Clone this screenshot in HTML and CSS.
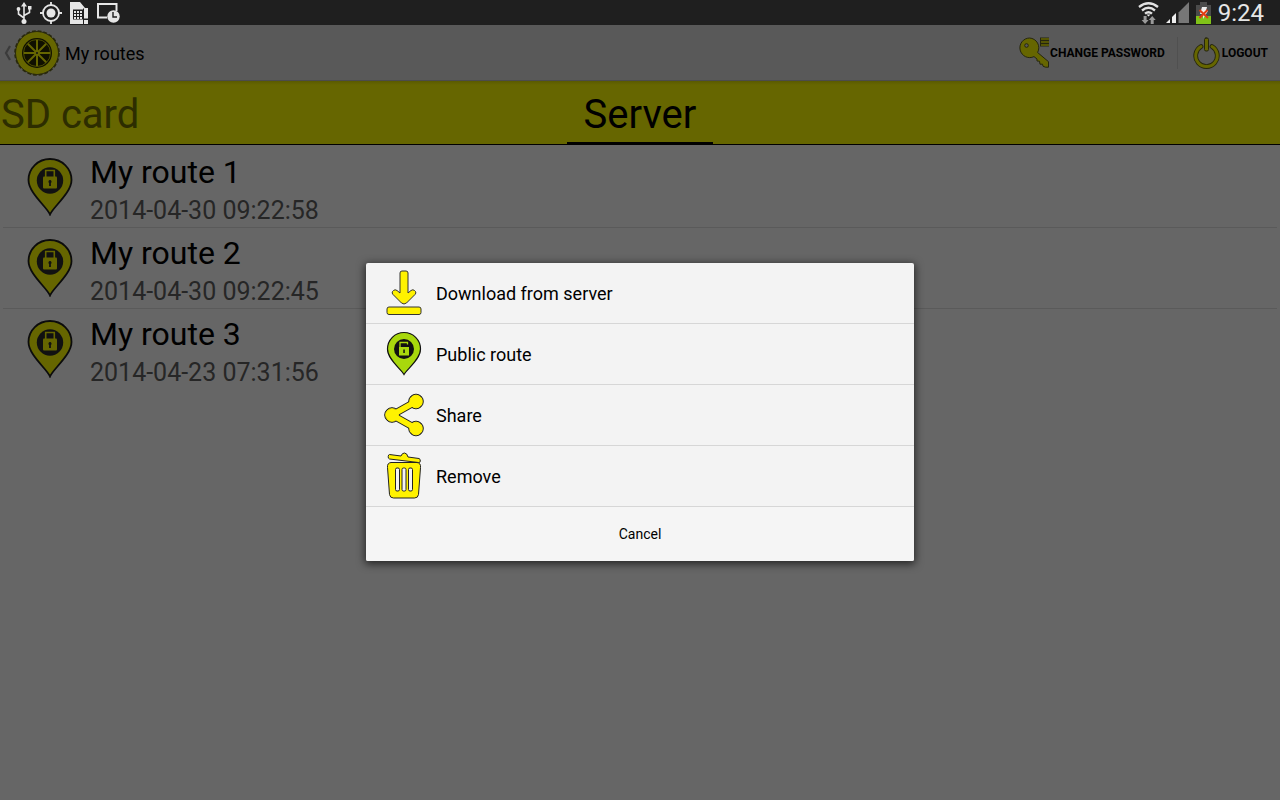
FILE: index.html
```html
<!DOCTYPE html>
<html lang="en">
<head>
<meta charset="utf-8">
<meta name="viewport" content="width=device-width, initial-scale=1">
<title>My routes</title>
<link rel="stylesheet" href="styles.css">
</head>
<body>
<svg class="sprite" aria-hidden="true">
  <symbol id="locked-pin" viewBox="0 0 46 58">
    <path d="M23 56.500C20 49 1.500 35 1.500 22a21.500 21 0 0 1 43 0C44.500 35 26 49 23 56.500z" fill="#666600" stroke="#0c0c0c" stroke-width="1.800"/>
    <circle cx="23" cy="22.500" r="13.200" fill="#111"/>
    <path d="M18.700 19v-6.500h8.600V19" fill="none" stroke="#666600" stroke-width="1.600"/>
    <rect x="16" y="18.500" width="14" height="12" rx="1" fill="#666600"/>
    <path d="M23 22a1.600 1.600 0 0 1 .9 2.900V28h-1.800v-3.100A1.600 1.600 0 0 1 23 22z" fill="#111"/>
  </symbol>
</svg>
<div class="screen">
  <div class="status">
    <div class="status-group notices">
      <svg width="16" height="22" viewBox="0 0 16 22" fill="none" stroke="#e6e6e6" stroke-width="1.600"><path d="M8 19V3M8 16l-5.500-4V7M8 13.500l5.500-3V6"/><path d="M8 0l3 4.500H5z" fill="#e6e6e6" stroke="none"/><circle cx="8" cy="19.500" r="2.500" fill="#e6e6e6" stroke="none"/><circle cx="2.500" cy="7" r="1.900" fill="#e6e6e6" stroke="none"/><path d="M12 4h3.500v3.500H12z" fill="#e6e6e6" stroke="none"/></svg>
      <svg width="22" height="22" viewBox="0 0 22 22" fill="none" stroke="#e6e6e6" stroke-width="1.800"><circle cx="11" cy="11" r="8"/><circle cx="11" cy="11" r="4.500" fill="#e6e6e6" stroke="none"/><path d="M11 0v4M11 18v4M0 11h4M18 11h4"/></svg>
      <svg width="19" height="22" viewBox="0 0 19 22"><path d="M0 0h10l5 6h3v10.500h-4V22H0z" fill="#e6e6e6"/><path d="M3 7.500h10v10H3z" fill="#1f1f1f"/><path d="M4 9h2v2H4zM7 9h2v2H7zM10 9h2v2h-2zM4 12h2v2H4zM7 12h2v2H7zM10 12h2v2h-2zM4 15h2v2H4zM7 15h2v2H7zM10 15h2v2h-2z" fill="#e6e6e6"/><path d="M13 6.500h1V22h-1z" fill="#1f1f1f"/><path d="M14 7h4v9h-4zM14 18h4v4h-4z" fill="#e6e6e6"/></svg>
      <svg width="23" height="20" viewBox="0 0 23 20"><path d="M10 14.500H1V1h18.500v7" fill="none" stroke="#e6e6e6" stroke-width="2"/><circle cx="16.500" cy="13.500" r="6.200" fill="#e6e6e6"/><path d="M16 9v5h4" fill="none" stroke="#1f1f1f" stroke-width="1.400"/></svg>
    </div>
    <div class="status-group signals">
      <svg width="21" height="22" viewBox="0 0 21 22" fill="none" stroke="#e2e2e2" stroke-width="2.300"><path d="M1 5q9.500-7.500 19 0M4 8.500q6.500-5.500 13 0M7 11.700q3.500-3 7 0"/><path d="M8.500 12.500h4l-2 2z" fill="#eee" stroke="none"/><path d="M5.600 14h3v4h2L7.100 22l-3.500-4h2zM12.700 22h3v-4h2l-3.500-4-3.500 4h2z" fill="#999" stroke="none"/></svg>
      <svg width="23" height="21" viewBox="0 0 23 21"><path d="M0 21l4-4v4zM6 21v-6l4-4v10z" fill="#eee"/><path d="M12.500 21V10.500L23 0v21z" fill="#777"/></svg>
      <svg width="15" height="22" viewBox="0 0 15 22"><path d="M0 3h4V0h7v3h4v12H0z" fill="#4b4b4b"/><path d="M0 14h15v8H0z" fill="#80c218"/><path d="M6 5h5l-1 4h2l-5 8v-5H4z" fill="#eee"/><path d="M3.500 8l8.500 8M11.500 8l-8 8" stroke="#e33a12" stroke-width="2"/></svg>
      <time>9:24</time>
    </div>
  </div>
  <main class="page">
    <header class="bar">
      <button class="home" type="button">
        <svg width="7" height="16" viewBox="0 0 7 16"><path d="M6 1L2 8l4 7" fill="none" stroke="#3b3b3b" stroke-width="2.200"/></svg>
        <svg class="wheel" width="46" height="46" viewBox="0 0 46 46"><circle cx="23" cy="23" r="21.500" fill="#666600" stroke="#2c2c0c" stroke-width="1"/><circle cx="23" cy="23" r="22" fill="none" stroke="#29290d" stroke-width="1.600" stroke-dasharray="3.800 1.960"/><circle cx="23" cy="23" r="15" fill="#101000"/><circle cx="23" cy="23" r="13.500" fill="none" stroke="#666600" stroke-width=".7"/><path d="M23 10v26M10 23h26M13.800 13.800l18.400 18.400M32.200 13.800L13.800 32.200" stroke="#666600" stroke-width="2"/><circle cx="23" cy="23" r="2.800" fill="#666600"/><circle cx="23" cy="23" r="1" fill="#111"/></svg>
        <span class="label">My routes</span>
      </button>
      <nav class="actions">
        <button class="action" type="button">
          <svg width="31" height="31" viewBox="0 0 31 31" fill="#666600" stroke="#26260e" stroke-width="1"><path d="M10.500 1a9.800 9.800 0 1 0 4.500 18.600l3 2.400v2l2.500.2.500 3h2.500l.5 2 2.500 1h3v-5.500L18.600 15.500A9.800 9.800 0 0 0 10.500 1z"/><circle cx="7.500" cy="8.500" r="1.800" fill="#595959"/><path d="M21 .5h9v9h-9z" fill="#26260e" stroke="none"/><path d="M22 2h8M22 5h8M22 8h8" stroke="#666600" stroke-width="1.300"/></svg>
          <span>CHANGE PASSWORD</span>
        </button>
        <button class="action logout" type="button">
          <svg width="27" height="32" viewBox="0 0 27 32" fill="none" stroke-linecap="round"><path d="M8 9.500a10.800 10.800 0 1 0 11 0" stroke="#26260e" stroke-width="4.800"/><path d="M8 9.500a10.800 10.800 0 1 0 11 0" stroke="#666600" stroke-width="3"/><rect x="11.500" y="1" width="4" height="13" rx="1.500" fill="#666600" stroke="#26260e"/></svg>
          <span>LOGOUT</span>
        </button>
      </nav>
    </header>
    <nav class="tabs">
      <button class="tab" type="button">SD card</button>
      <button class="tab current" type="button" aria-current="page">Server</button>
    </nav>
    <ul class="routes">
      <li class="route"><svg width="46" height="58"><use href="#locked-pin"/></svg><div><h2>My route 1</h2><p>2014-04-30 09:22:58</p></div></li>
      <li class="route"><svg width="46" height="58"><use href="#locked-pin"/></svg><div><h2>My route 2</h2><p>2014-04-30 09:22:45</p></div></li>
      <li class="route"><svg width="46" height="58"><use href="#locked-pin"/></svg><div><h2>My route 3</h2><p>2014-04-23 07:31:56</p></div></li>
    </ul>
    <div class="overlay">
      <div class="dialog" role="dialog" aria-label="Route actions">
        <button class="option" type="button">
          <svg width="42" height="48" viewBox="0 0 42 48" fill="#fff200" stroke="#333" stroke-width="1"><path d="M19 2h4q2 0 2 2v20l3-2.500q2-1.500 3.500 0l1 1q1 1.500-.5 3L23.500 34q-2.500 2-5 0L10 25.500q-1.500-1.500-.5-3l1-1q1.500-1.500 3.500 0l3 2.500V4q0-2 2-2z"/><rect x="4" y="38" width="34" height="7.500" rx="2"/></svg>
          <span class="label">Download from server</span>
        </button>
        <button class="option" type="button">
          <svg width="42" height="48" viewBox="0 0 42 48"><path d="M21 44.500C18 39 4.500 29.500 4.500 19a16.500 16.500 0 0 1 33 0C37.500 29.500 24 39 21 44.500z" fill="#a8d80c" stroke="#111" stroke-width="1.200"/><circle cx="21" cy="19" r="10" fill="#111"/><path d="M17 18v-5.500h7.500v2" fill="none" stroke="#a8d80c" stroke-width="1.300"/><path d="M16 17h10v8.500H16z" fill="#a8d80c"/><path d="M20.300 19.500h1.500v3.500h-1.500z" fill="#111"/></svg>
          <span class="label">Public route</span>
        </button>
        <button class="option" type="button">
          <svg width="42" height="48" viewBox="0 0 42 48"><g fill="#222" stroke="#222"><path d="M9 24L33 10.500M9 24l24 13.500" stroke-width="7.500"/><circle cx="9" cy="24" r="7.300"/><circle cx="33" cy="10.500" r="7.300"/><circle cx="33" cy="37.500" r="7.300"/></g><g fill="#fff200" stroke="#fff200"><path d="M9 24L33 10.500M9 24l24 13.500" stroke-width="5.500"/><circle cx="9" cy="24" r="6.300"/><circle cx="33" cy="10.500" r="6.300"/><circle cx="33" cy="37.500" r="6.300"/></g></svg>
          <span class="label">Share</span>
        </button>
        <button class="option" type="button">
          <svg width="42" height="48" viewBox="0 0 42 48" fill="#fff200" stroke="#222" stroke-width="1"><path d="M6.500 2.500L18 4q1-3 3.500-3T25 5l11 1.500q1.500.5 1.300 2.500t-1.800 1.500L6.500 7q-1.500-.5-1.300-2.500t1.300-2z"/><path d="M8 10.500h26q4 .5 3.500 5l-2 27q-.5 3.500-4 3.500h-21Q7 46 6.500 42.500l-2-27q-.5-4.500 3.500-5z"/><g fill="#f3f3f3"><rect x="12.500" y="16" width="4" height="23" rx="1.500"/><rect x="19" y="16" width="4" height="23" rx="1.500"/><rect x="25.500" y="16" width="4" height="23" rx="1.500"/></g></svg>
          <span class="label">Remove</span>
        </button>
        <button class="cancel" type="button">Cancel</button>
      </div>
    </div>
  </main>
</div>
</body>
</html>
```
FILE: styles.css
```css
* { box-sizing: border-box; }
body { margin: 0; background: #666; color: #000; font-family: Roboto, "Noto Sans", sans-serif; }
button { border: 0; margin: 0; padding: 0; background: none; color: inherit; font: inherit; cursor: pointer; }
svg { display: block; flex: none; }
.sprite { position: absolute; width: 0; height: 0; }
.screen { display: flex; flex-direction: column; min-height: 100vh; }
.status { display: flex; justify-content: space-between; align-items: center; height: 25px; padding: 0 16px; background: #1f1f1f; color: #e6e6e6; }
.status-group { display: flex; align-items: center; }
.notices { gap: 8px; }
.signals { gap: 7px; }
.status time { font-size: 24px; line-height: 24px; }
.page { position: relative; flex: 1; }
.bar { display: flex; justify-content: space-between; height: 56px; padding: 0 12px 0 4px; background: #595959; border-bottom: 1px solid #4b4b4b; }
.home { display: flex; align-items: center; font-size: 18px; }
.label { padding-top: 2px; }
.wheel { margin: 0 5px 0 3px; }
.actions { display: flex; align-items: center; font-size: 12px; font-weight: 700; }
.action { display: flex; align-items: center; height: 32px; }
.logout { gap: 2px; margin-left: 12px; padding-left: 15px; border-left: 1px solid #505050; }
.tabs { display: grid; grid-template-columns: 1fr auto 1fr; height: 64px; background: linear-gradient(#5a5a00, #666600 4px); border-bottom: 1px solid #000; font-size: 40px; line-height: 54px; }
.tab { justify-self: start; padding: 7px 1px 0; color: #2d2d00; border-bottom: 2px solid transparent; }
.current { padding: 7px 17px 0; color: #000; border-bottom-color: #000; }
.routes { list-style: none; margin: 0; padding: 0 3px; }
.route { display: flex; gap: 17px; height: 81px; padding: 11px 0 0 24px; border-top: 1px solid #5a5a5a; }
.route:first-child { height: 82px; padding-top: 12px; border-top-color: transparent; }
.route h2, .route p { margin: 0; font-weight: 400; }
.route h2 { font-size: 32px; line-height: 28px; }
.route p { margin-top: 13px; font-size: 25px; line-height: 24px; color: #262626; }
.overlay { position: absolute; inset: 0; display: flex; align-items: center; justify-content: center; padding-bottom: 2px; }
.dialog { display: flex; flex-direction: column; width: 548px; max-width: 100%; background: #f3f3f3; border-radius: 2px; box-shadow: 0 2px 8px 1px rgba(0, 0, 0, .65); overflow: hidden; }
.option { display: flex; align-items: center; gap: 11px; height: 61px; padding: 0 17px; border-bottom: 1px solid #d6d6d6; font-size: 18px; text-align: left; }
.cancel { height: 54px; background: #f5f5f5; font-size: 14px; }
```
